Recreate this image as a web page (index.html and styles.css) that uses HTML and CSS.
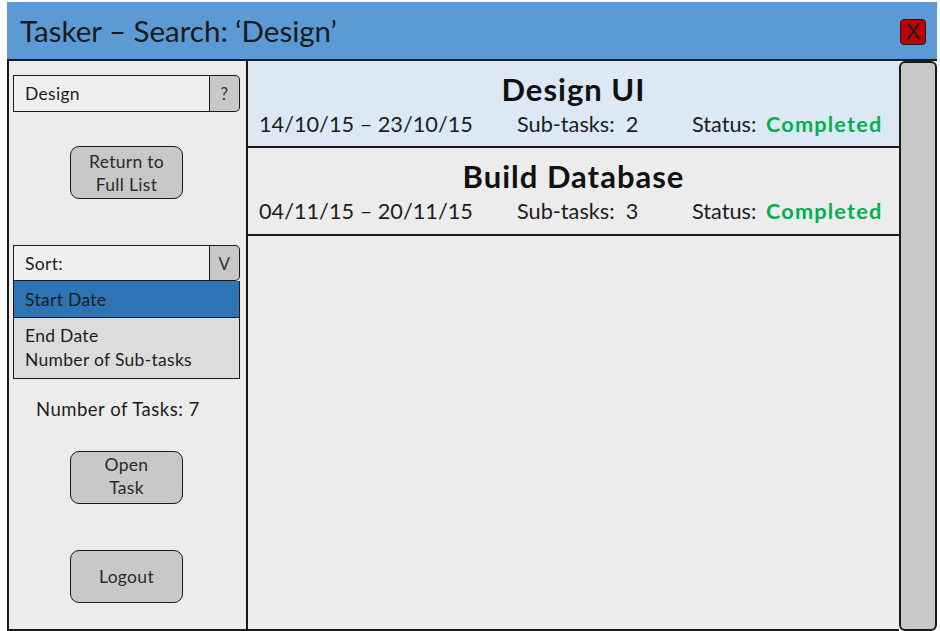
FILE: index.html
```html
<!DOCTYPE html>
<html lang="en">
<head>
<meta charset="utf-8">
<title>Tasker – Search</title>
<link rel="stylesheet" href="styles.css">
</head>
<body>
<div class="window">
  <header class="titlebar">
    <h1 class="title">Tasker – Search: ‘Design’</h1>
    <span class="close">X</span>
  </header>
  <div class="content">
    <aside class="sidebar">
      <div class="combo search">
        <span class="field">Design</span>
        <span class="combo-btn">?</span>
      </div>
      <div class="btn btn-return">Return to<br>Full List</div>
      <div class="sort">
        <div class="combo">
          <span class="field">Sort:</span>
          <span class="combo-btn">V</span>
        </div>
        <div class="opt-selected">Start Date</div>
        <div class="opts">
          <div>End Date</div>
          <div>Number of Sub-tasks</div>
        </div>
      </div>
      <p class="count">Number of Tasks: 7</p>
      <div class="btn btn-open">Open<br>Task</div>
      <div class="btn btn-logout">Logout</div>
    </aside>
    <main class="list">
      <div class="task active">
        <div class="task-name">Design UI</div>
        <div class="task-meta">
          <span class="dates">14/10/15 – 23/10/15</span>
          <span class="subs">Sub-tasks:&nbsp; 2</span>
          <span class="status">Status: <b>Completed</b></span>
        </div>
      </div>
      <div class="task">
        <div class="task-name">Build Database</div>
        <div class="task-meta">
          <span class="dates">04/11/15 – 20/11/15</span>
          <span class="subs">Sub-tasks:&nbsp; 3</span>
          <span class="status">Status: <b>Completed</b></span>
        </div>
      </div>
    </main>
    <div class="scrollbar"></div>
  </div>
</div>
</body>
</html>
```

FILE: styles.css
```css
* { box-sizing: border-box; }
html, body { margin: 0; padding: 0; background: #ffffff; }
body {
  font-family: Lato, "Open Sans", "Liberation Sans", sans-serif;
  color: #1c1c1c;
}
.window {
  margin: 2px 0 0 7px;
  width: 930px;
  height: 629px;
  display: flex;
  flex-direction: column;
}
.titlebar {
  height: 59px;
  background: #5b9ad5;
  border-bottom: 2px solid #1a1a1a;
  display: flex;
  align-items: center;
  justify-content: space-between;
  padding: 0 11px 0 13px;
}
.title {
  margin: 0;
  font-size: 29.5px;
  font-weight: 400;
  color: #1a1a1a;
  letter-spacing: 0;
}
.close {
  width: 26px;
  height: 26px;
  margin-top: 2px;
  background: #c00000;
  border: 1px solid #1a1a1a;
  border-radius: 4px;
  display: flex;
  align-items: center;
  justify-content: center;
  font-family: "Liberation Sans", sans-serif;
  font-size: 24px;
  line-height: 1;
  color: #1a1a1a;
  font-weight: 300;
}
.content {
  flex: 1;
  display: flex;
  min-height: 0;
}
.sidebar {
  width: 241px;
  background: #ececec;
  border-left: 2px solid #1a1a1a;
  border-right: 2px solid #1a1a1a;
  border-bottom: 2px solid #1a1a1a;
  padding: 14px 6px 0 4px;
  display: flex;
  flex-direction: column;
  font-size: 17.5px;
  letter-spacing: 0.3px;
}
.combo {
  display: flex;
  height: 37px;
}
.field {
  flex: 1;
  background: #efefef;
  border: 1.5px solid #1a1a1a;
  display: flex;
  align-items: center;
  padding-left: 11px;
}
.combo-btn {
  width: 30px;
  background: #c8c8c8;
  border: 1.5px solid #1a1a1a;
  border-left: none;
  border-radius: 0 5px 5px 0;
  display: flex;
  align-items: center;
  justify-content: center;
  font-size: 17px;
  color: #333;
}
.btn {
  align-self: flex-start;
  width: 113px;
  margin-left: 57px;
  background: #c8c8c8;
  border: 1.5px solid #1a1a1a;
  border-radius: 9px;
  text-align: center;
  font-size: 17.5px;
  line-height: 23px;
  color: #2a2a2a;
  display: flex;
  align-items: center;
  justify-content: center;
  height: 53px;
}
.btn-return { margin-top: 34px; }
.sort { margin-top: 46px; }
.sort .combo { height: 36px; }
.opt-selected {
  height: 36px;
  background: #2e74b5;
  border-left: 1.5px solid #1a1a1a;
  border-right: 1.5px solid #1a1a1a;
  display: flex;
  align-items: center;
  padding-left: 11px;
}
.opts {
  height: 62px;
  background: #dcdcdc;
  border: 1.5px solid #1a1a1a;
  padding: 6px 0 0 11px;
  line-height: 24px;
}
.count {
  margin: 20px 0 0 23px;
  font-size: 18.5px;
  letter-spacing: 0.5px;
  line-height: 20px;
}
.btn-open { margin-top: 32px; padding-bottom: 3px; }
.btn-logout { margin-top: 46px; }
.list {
  width: 651px;
  background: #ececec;
  border-bottom: 2px solid #1a1a1a;
}
.task {
  height: 88px;
  border-bottom: 2px solid #1a1a1a;
  padding-top: 10px;
}
.task.active { background: #dde8f5; height: 87px; }
.task-name {
  text-align: center;
  font-size: 31px;
  letter-spacing: 1px;
  font-weight: 700;
  line-height: 36px;
  color: #111;
}
.task-meta {
  display: flex;
  padding: 4px 0 0 11px;
  font-size: 21.7px;
  line-height: 26px;
  color: #1c1c1c;
}
.dates { width: 258px; }
.subs { width: 175px; }
.status b {
  color: #00b050;
  font-weight: 700;
  letter-spacing: 1.2px;
  margin-left: 4px;
}
.scrollbar {
  width: 38px;
  background: #c8c8c8;
  border: 2px solid #1a1a1a;
  border-radius: 6px;
}
```
